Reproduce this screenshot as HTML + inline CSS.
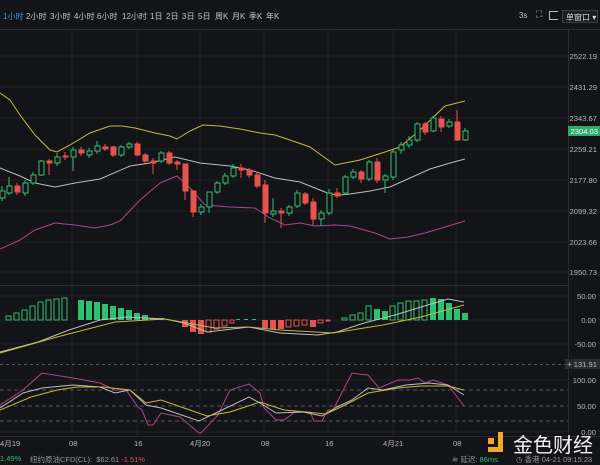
<!DOCTYPE html>
<html><head><meta charset="utf-8"><style>
body{margin:0;width:600px;height:461px;overflow:hidden;background:#131417;font-family:"Liberation Sans","Noto Sans CJK SC",sans-serif;color:#c8c8c8}
.t{position:absolute;font-size:8px;white-space:nowrap}
</style></head><body>
<div style="position:relative;width:600px;height:461px">
<svg width="600" height="461" style="position:absolute;left:0;top:0" font-family="Liberation Sans, Noto Sans CJK SC, sans-serif">
<line x1="0" y1="29.5" x2="600" y2="29.5" stroke="#2a2c30"/>
<g stroke="#1e2024" stroke-width="1">
<line x1="0" y1="56" x2="568" y2="56"/><line x1="0" y1="87" x2="568" y2="87"/><line x1="0" y1="118" x2="568" y2="118"/><line x1="0" y1="149" x2="568" y2="149"/><line x1="0" y1="180" x2="568" y2="180"/><line x1="0" y1="211" x2="568" y2="211"/><line x1="0" y1="242" x2="568" y2="242"/><line x1="0" y1="272" x2="568" y2="272"/>
<line x1="0" y1="296" x2="568" y2="296"/><line x1="0" y1="320" x2="568" y2="320"/><line x1="0" y1="344" x2="568" y2="344"/><line x1="0" y1="380" x2="568" y2="380"/><line x1="0" y1="432" x2="568" y2="432"/>
<line x1="72" y1="30" x2="72" y2="436"/><line x1="137" y1="30" x2="137" y2="436"/><line x1="200" y1="30" x2="200" y2="436"/><line x1="264" y1="30" x2="264" y2="436"/><line x1="328" y1="30" x2="328" y2="436"/><line x1="393" y1="30" x2="393" y2="436"/><line x1="456" y1="30" x2="456" y2="436"/>
</g>
<line x1="568.5" y1="30" x2="568.5" y2="436" stroke="#2a2c30"/>
<line x1="0" y1="285.5" x2="568" y2="285.5" stroke="#2a2c30"/>
<line x1="0" y1="364.5" x2="568" y2="364.5" stroke="#55575c" stroke-dasharray="3,3"/>
<g stroke="#55575c" stroke-dasharray="4,3"><line x1="0" y1="390" x2="568" y2="390"/><line x1="0" y1="406" x2="568" y2="406"/><line x1="0" y1="421" x2="568" y2="421"/></g>
<line x1="0" y1="436.5" x2="600" y2="436.5" stroke="#2a2c30"/>

<polyline fill="none" stroke="#c9b93a" stroke-width="1" points="0,93 10,100 20,115 35,135 50,150 57,152 70,145 90,133 110,126 122,126 135,128 155,133 170,136 177,139 190,131 203,125 220,126 240,129 260,133 275,135 290,140 310,147 335,165 360,160 385,152 400,147 420,130 445,106 465,101"/>
<polyline fill="none" stroke="#bdbdc2" stroke-width="1" points="0,168 20,176 35,183 55,187 75,183 100,179 130,166 150,163 175,157 200,163 230,166 250,170 275,178 300,182 320,190 330,194 340,195 350,194 370,191 390,187 410,178 430,169 450,163 465,159"/>
<polyline fill="none" stroke="#b0448f" stroke-width="1" points="0,249 20,240 35,230 55,223 75,225 95,228 110,225 120,221 140,200 160,183 177,176 190,188 205,205 230,207 255,208 270,218 285,225 300,223 315,226 335,225 350,226 375,233 390,239 408,237 425,233 445,227 465,221"/>

<g stroke-width="1">
<g stroke="#2fbf71" fill="#131417">
<line x1="2" y1="186" x2="2" y2="201"/><rect x="0" y="191" width="5" height="7"/>
<line x1="9" y1="177" x2="9" y2="195"/><rect x="7" y="186" width="5" height="7"/>
<line x1="25" y1="180" x2="25" y2="196"/><rect x="23" y="183" width="5" height="10"/>
<line x1="33" y1="172" x2="33" y2="185"/><rect x="31" y="175" width="5" height="8"/>
<line x1="41" y1="160" x2="41" y2="176"/><rect x="39" y="161" width="5" height="14"/>
<line x1="57" y1="153" x2="57" y2="166"/><rect x="55" y="157" width="5" height="6"/>
<line x1="73" y1="147" x2="73" y2="171"/><rect x="71" y="150" width="5" height="7"/>
<line x1="89" y1="148" x2="89" y2="158"/><rect x="87" y="151" width="5" height="4"/>
<line x1="97" y1="141" x2="97" y2="154"/><rect x="95" y="146" width="5" height="5"/>
<line x1="121" y1="145" x2="121" y2="157"/><rect x="119" y="147" width="5" height="8"/>
<line x1="129" y1="142" x2="129" y2="149"/><rect x="127" y="144" width="5" height="3"/>
<line x1="161" y1="151" x2="161" y2="163"/><rect x="159" y="153" width="5" height="8"/>
<line x1="201" y1="204" x2="201" y2="215"/><rect x="199" y="207" width="5" height="5"/>
<line x1="209" y1="192" x2="209" y2="213"/><rect x="207" y="192" width="5" height="15"/>
<line x1="217" y1="181" x2="217" y2="194"/><rect x="215" y="183" width="5" height="9"/>
<line x1="225" y1="173" x2="225" y2="185"/><rect x="223" y="176" width="5" height="7"/>
<line x1="233" y1="164" x2="233" y2="178"/><rect x="231" y="168" width="5" height="8"/>
<line x1="273" y1="198" x2="273" y2="217"/><rect x="271" y="211" width="5" height="3"/>
<line x1="289" y1="205" x2="289" y2="216"/><rect x="287" y="207" width="5" height="6"/>
<line x1="297" y1="190" x2="297" y2="208"/><rect x="295" y="193" width="5" height="13"/>
<line x1="321" y1="210" x2="321" y2="226"/><rect x="319" y="213" width="5" height="6"/>
<line x1="329" y1="189" x2="329" y2="215"/><rect x="327" y="193" width="5" height="20"/>
<line x1="345" y1="175" x2="345" y2="195"/><rect x="343" y="177" width="5" height="16"/>
<line x1="353" y1="169" x2="353" y2="179"/><rect x="351" y="172" width="5" height="5"/>
<line x1="369" y1="160" x2="369" y2="181"/><rect x="367" y="162" width="5" height="17"/>
<line x1="385" y1="174" x2="385" y2="193"/><rect x="383" y="176" width="5" height="4"/>
<line x1="393" y1="150" x2="393" y2="180"/><rect x="391" y="152" width="5" height="25"/>
<line x1="401" y1="142" x2="401" y2="154"/><rect x="399" y="145" width="5" height="5"/>
<line x1="409" y1="136" x2="409" y2="148"/><rect x="407" y="140" width="5" height="5"/>
<line x1="417" y1="122" x2="417" y2="142"/><rect x="415" y="124" width="5" height="16"/>
<line x1="433" y1="116" x2="433" y2="132"/><rect x="431" y="118" width="5" height="13"/>
<line x1="449" y1="119" x2="449" y2="128"/><rect x="447" y="122" width="5" height="4"/>
<line x1="465" y1="128" x2="465" y2="141"/><rect x="463" y="131" width="5" height="9"/>
</g>
<g stroke="#e8524f" fill="#e8524f">
<line x1="17" y1="183" x2="17" y2="195"/><rect x="15" y="186" width="5" height="6"/>
<line x1="49" y1="159" x2="49" y2="175"/><rect x="47" y="161" width="5" height="2"/>
<line x1="65" y1="152" x2="65" y2="160"/><rect x="63" y="156" width="5" height="1"/>
<line x1="81" y1="147" x2="81" y2="156"/><rect x="79" y="150" width="5" height="3"/>
<line x1="105" y1="144" x2="105" y2="151"/><rect x="103" y="147" width="5" height="2"/>
<line x1="113" y1="146" x2="113" y2="157"/><rect x="111" y="147" width="5" height="8"/>
<line x1="137" y1="142" x2="137" y2="156"/><rect x="135" y="144" width="5" height="11"/>
<line x1="145" y1="153" x2="145" y2="163"/><rect x="143" y="155" width="5" height="6"/>
<line x1="153" y1="158" x2="153" y2="174"/><rect x="151" y="161" width="5" height="2"/>
<line x1="169" y1="151" x2="169" y2="165"/><rect x="167" y="153" width="5" height="10"/>
<line x1="177" y1="160" x2="177" y2="170"/><rect x="175" y="162" width="5" height="2"/>
<line x1="185" y1="164" x2="185" y2="200"/><rect x="183" y="164" width="5" height="27"/>
<line x1="193" y1="190" x2="193" y2="217"/><rect x="191" y="191" width="5" height="21"/>
<line x1="241" y1="164" x2="241" y2="178"/><rect x="239" y="168" width="5" height="2"/>
<line x1="249" y1="168" x2="249" y2="178"/><rect x="247" y="170" width="5" height="5"/>
<line x1="257" y1="173" x2="257" y2="188"/><rect x="255" y="175" width="5" height="11"/>
<line x1="265" y1="180" x2="265" y2="223"/><rect x="263" y="185" width="5" height="28"/>
<line x1="281" y1="208" x2="281" y2="228"/><rect x="279" y="211" width="5" height="2"/>
<line x1="305" y1="192" x2="305" y2="205"/><rect x="303" y="194" width="5" height="9"/>
<line x1="313" y1="198" x2="313" y2="225"/><rect x="311" y="202" width="5" height="17"/>
<line x1="337" y1="188" x2="337" y2="198"/><rect x="335" y="193" width="5" height="3"/>
<line x1="361" y1="170" x2="361" y2="183"/><rect x="359" y="172" width="5" height="7"/>
<line x1="377" y1="158" x2="377" y2="183"/><rect x="375" y="162" width="5" height="18"/>
<line x1="425" y1="122" x2="425" y2="135"/><rect x="423" y="124" width="5" height="8"/>
<line x1="441" y1="116" x2="441" y2="132"/><rect x="439" y="119" width="5" height="8"/>
<line x1="457" y1="110" x2="457" y2="141"/><rect x="455" y="122" width="5" height="18"/>
</g>
</g>

<g stroke="#2fbf71" fill="none">
<rect x="6" y="316" width="5" height="4"/><rect x="14" y="313" width="5" height="7"/><rect x="22" y="310" width="5" height="10"/><rect x="30" y="306" width="5" height="14"/><rect x="38" y="302" width="5" height="18"/><rect x="46" y="300" width="5" height="20"/><rect x="54" y="299" width="5" height="21"/><rect x="62" y="298" width="5" height="22"/>
<rect x="342" y="318" width="5" height="2"/><rect x="350" y="315" width="5" height="5"/><rect x="358" y="313" width="5" height="7"/><rect x="366" y="306" width="5" height="14"/><rect x="390" y="306" width="5" height="14"/><rect x="398" y="303" width="5" height="17"/><rect x="406" y="301" width="5" height="19"/><rect x="414" y="301" width="5" height="19"/><rect x="422" y="300" width="5" height="20"/>
</g>
<g fill="#2fbf71">
<rect x="78" y="300" width="6" height="20"/><rect x="86" y="301" width="6" height="19"/><rect x="94" y="302" width="6" height="18"/><rect x="102" y="304" width="6" height="16"/><rect x="110" y="306" width="6" height="14"/><rect x="118" y="308" width="6" height="12"/><rect x="126" y="310" width="6" height="10"/><rect x="134" y="313" width="6" height="7"/><rect x="142" y="315" width="6" height="5"/><rect x="150" y="318" width="6" height="2"/><rect x="158" y="318" width="6" height="2"/>
<rect x="236" y="319" width="4" height="1"/><rect x="244" y="319" width="4" height="1"/><rect x="252" y="319" width="4" height="1"/>
<rect x="374" y="309" width="6" height="11"/><rect x="382" y="311" width="6" height="9"/>
<rect x="430" y="298" width="6" height="22"/><rect x="438" y="299" width="6" height="21"/><rect x="446" y="303" width="6" height="17"/><rect x="454" y="309" width="6" height="11"/><rect x="462" y="313" width="6" height="7"/>
</g>
<g fill="#e8524f"><rect x="182" y="320" width="6" height="7"/><rect x="190" y="320" width="6" height="12"/><rect x="198" y="320" width="6" height="14"/><rect x="262" y="320" width="6" height="8"/><rect x="270" y="320" width="6" height="9"/><rect x="278" y="320" width="6" height="9"/><rect x="310" y="320" width="6" height="7"/></g>
<g stroke="#e8524f" fill="none"><rect x="206" y="320" width="5" height="12"/><rect x="214" y="320" width="5" height="9"/><rect x="222" y="320" width="5" height="6"/><rect x="230" y="320" width="4" height="3"/><rect x="286" y="320" width="5" height="7"/><rect x="294" y="320" width="5" height="6"/><rect x="302" y="320" width="5" height="5"/><rect x="318" y="320" width="5" height="3"/><rect x="326" y="320" width="4" height="1"/></g>
<polyline fill="none" stroke="#bdbdc2" points="0,352 38,342 69,330 100,320 126,317 165,319 184,323 207,332 249,327 280,333 318,335 337,332 364,323 395,315 421,307 448,299 464,302"/>
<polyline fill="none" stroke="#c9b93a" points="0,353 57,337 115,322 165,319 215,328 249,327 280,330 333,333 383,325 421,317 464,305"/>

<polyline fill="none" stroke="#b0448f" points="0,405 23,390 42,373 73,378 100,383 115,390 126,390 138,407 142,410 148,425 153,425 161,413 180,417 199,433 201,433 218,415 230,390 249,384 260,393 264,408 276,420 284,420 295,412 310,412 314,421 322,421 328,410 333,410 352,373 358,374 368,375 379,388 398,380 410,380 418,378 425,383 433,380 448,385 464,406"/>
<polyline fill="none" stroke="#bdbdc2" points="0,408 23,393 42,388 73,385 100,387 115,393 130,390 146,405 161,408 199,421 222,410 249,397 260,403 276,413 303,412 322,416 337,407 352,400 368,388 383,390 406,385 429,383 448,385 464,395"/>
<polyline fill="none" stroke="#c9b93a" points="0,410 31,397 57,390 77,387 103,387 130,390 146,403 161,400 184,408 207,416 230,412 260,402 284,410 306,412 326,414 345,405 368,393 398,388 421,386 448,386 464,390"/>

<rect x="568" y="126" width="32" height="10" fill="#2fa86a"/>
<rect x="565" y="359" width="35" height="10" fill="#2a2c30"/>
<g font-size="7.6" fill="#b8b8b8" text-anchor="end">
<text x="597" y="59">2522.19</text><text x="597" y="90">2431.29</text><text x="597" y="121">2343.67</text><text x="598" y="134" fill="#fff">2304.03</text><text x="597" y="152">2259.21</text><text x="597" y="183">2177.80</text><text x="597" y="214">2099.32</text><text x="597" y="245">2023.66</text><text x="597" y="275">1950.73</text>
<text x="596" y="299">50.00</text><text x="596" y="323">0.00</text><text x="596" y="347">-50.00</text>
<text x="597" y="367">131.91</text>
<text x="596" y="383">100.00</text><text x="596" y="409">50.00</text><text x="596" y="435">0.00</text>
</g>
<text x="567" y="367" font-size="8" fill="#b8b8b8">+</text>
<g font-size="7.6" fill="#b8b8b8">
<text x="0" y="446">4月19</text><text x="69" y="446">08</text><text x="134" y="446">16</text><text x="190" y="446">4月20</text><text x="261" y="446">08</text><text x="325" y="446">16</text><text x="383" y="446">4月21</text><text x="453" y="446">08</text>
</g>
<rect x="488" y="438" width="6" height="6" fill="#f5a623"/>
<path d="M498 432h5v20h-15v-5h10z" fill="#f5a623"/>
<text x="513" y="452" font-size="20" fill="#f2f2f2" font-family="Noto Sans CJK SC, sans-serif">金色财经</text>
</svg>
<div class="t" style="left:3px;top:11px;color:#4a90e2">1小时</div>
<div class="t" style="left:26px;top:11px">2小时</div>
<div class="t" style="left:50px;top:11px">3小时</div>
<div class="t" style="left:74px;top:11px">4小时</div>
<div class="t" style="left:97px;top:11px">6小时</div>
<div class="t" style="left:122px;top:11px">12小时</div>
<div class="t" style="left:150px;top:11px">1日</div>
<div class="t" style="left:166px;top:11px">2日</div>
<div class="t" style="left:182px;top:11px">3日</div>
<div class="t" style="left:198px;top:11px">5日</div>
<div class="t" style="left:215px;top:11px">周K</div>
<div class="t" style="left:232px;top:11px">月K</div>
<div class="t" style="left:249px;top:11px">季K</div>
<div class="t" style="left:266px;top:11px">年K</div>
<div class="t" style="left:519px;top:11px">3s</div>
<div class="t" style="left:536px;top:9px;font-size:9px">⛶</div>
<div style="position:absolute;left:549px;top:11px;width:8px;height:7px;border:1px solid #bbb;border-right:none"></div>
<div class="t" style="left:562px;top:10px;width:36px;height:13px;border:1px solid #3a3c40;background:#1c1d21;font-size:8px;line-height:13px;padding-left:3px;box-sizing:border-box;color:#ddd">单窗口 ▾</div>
<div class="t" style="left:0;top:454px;font-size:7.5px;color:#2fbf71">1.49%</div>
<div class="t" style="left:30px;top:454px;font-size:7.5px;color:#999">纽约原油CFD(CL):&nbsp; $62.61 <span style="color:#e8524f">-1.51%</span></div>
<div class="t" style="left:452px;top:454px;font-size:7.5px;color:#999">≋ 延迟: <span style="color:#2fbf71">86ms</span></div>
<div class="t" style="left:516px;top:454px;font-size:7.5px;color:#999">◷ 香港 04-21 09:15:23</div>
</div>
</body></html>
